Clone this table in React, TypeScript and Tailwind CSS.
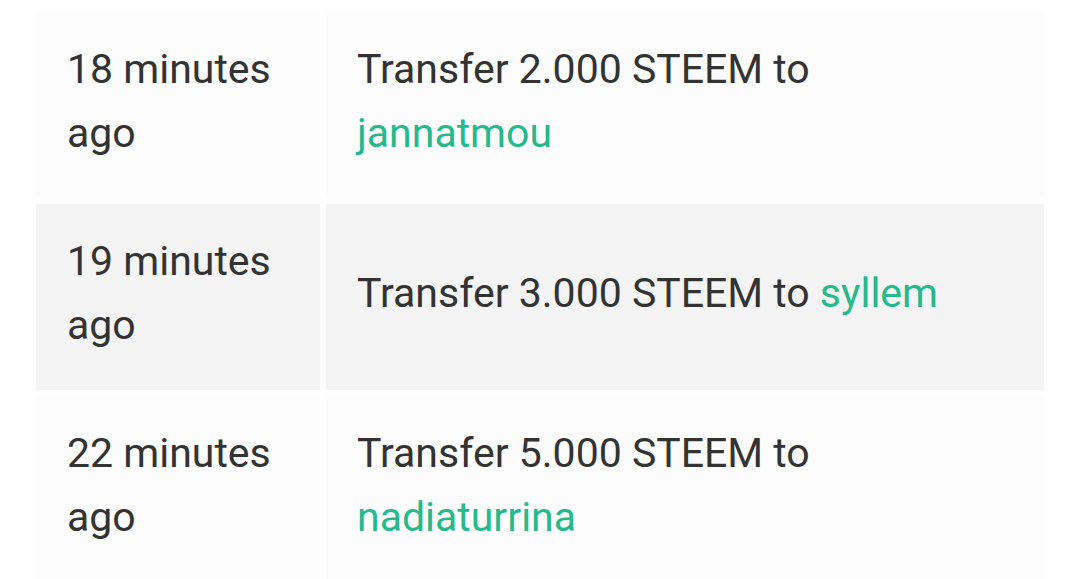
import React from "react";

const rows = [
  { time: "18 minutes ago", amount: "2.000", to: "jannatmou", bg: "bg-[#fcfcfc]" },
  { time: "19 minutes ago", amount: "3.000", to: "syllem", bg: "bg-[#f4f4f4]" },
  { time: "22 minutes ago", amount: "5.000", to: "nadiaturrina", bg: "bg-[#fcfcfc]" },
];

export default function App() {
  return (
    <div
      className="w-[1080px] h-[579px] overflow-hidden bg-white text-[#333333] text-[41px] leading-[64px]"
      style={{ fontFamily: "Roboto, 'Noto Sans', sans-serif" }}
    >
      <div className="ml-[36px] mt-[12px] grid grid-cols-[284px_718px] gap-[6px]">
        {rows.map((r, i) => (
          <React.Fragment key={i}>
            <div className={`${r.bg} flex items-center pl-[31px] pr-[31px] pt-[25px] pb-[33px]`}>
              <span>{r.time}</span>
            </div>
            <div className={`${r.bg} flex items-center pl-[31px] pr-[60px] pt-[25px] pb-[33px]`}>
              <span>
                Transfer {r.amount} STEEM to{" "}
                <a className="text-[#26b98c]">{r.to}</a>
              </span>
            </div>
          </React.Fragment>
        ))}
      </div>
    </div>
  );
}
